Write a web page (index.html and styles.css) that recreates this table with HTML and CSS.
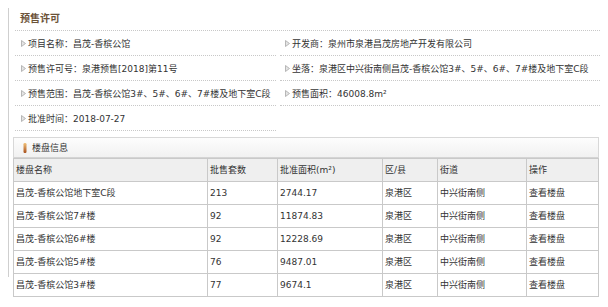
FILE: index.html
```html
<!DOCTYPE html>
<html lang="zh-CN">
<head>
<meta charset="utf-8">
<title>预售许可</title>
<link rel="stylesheet" href="styles.css">
</head>
<body>
<div class="page">
  <div class="rule"></div>
  <div class="content">
    <section class="permit">
      <h2 class="permit-title">预售许可</h2>
      <div class="info">
        <div class="item"><svg class="arrow" viewBox="0 0 5 7"><polygon points="0.5,0.5 4.5,3.5 0.5,6.5"/></svg>项目名称：昌茂-香槟公馆</div>
        <div class="item right"><svg class="arrow" viewBox="0 0 5 7"><polygon points="0.5,0.5 4.5,3.5 0.5,6.5"/></svg>开发商：泉州市泉港昌茂房地产开发有限公司</div>
        <div class="item"><svg class="arrow" viewBox="0 0 5 7"><polygon points="0.5,0.5 4.5,3.5 0.5,6.5"/></svg>预售许可号：泉港预售[2018]第11号</div>
        <div class="item right"><svg class="arrow" viewBox="0 0 5 7"><polygon points="0.5,0.5 4.5,3.5 0.5,6.5"/></svg>坐落：泉港区中兴街南侧昌茂-香槟公馆3#、5#、6#、7#楼及地下室C段</div>
        <div class="item"><svg class="arrow" viewBox="0 0 5 7"><polygon points="0.5,0.5 4.5,3.5 0.5,6.5"/></svg>预售范围：昌茂-香槟公馆3#、5#、6#、7#楼及地下室C段</div>
        <div class="item right"><svg class="arrow" viewBox="0 0 5 7"><polygon points="0.5,0.5 4.5,3.5 0.5,6.5"/></svg>预售面积：46008.8m²</div>
        <div class="item"><svg class="arrow" viewBox="0 0 5 7"><polygon points="0.5,0.5 4.5,3.5 0.5,6.5"/></svg>批准时间：2018-07-27</div>
      </div>
    </section>
    <section class="houses">
      <div class="houses-head"><svg class="flag" viewBox="0 0 4 10"><defs><linearGradient id="fg" x1="0" y1="0" x2="0" y2="1"><stop offset="0" stop-color="#f2c27a"/><stop offset="1" stop-color="#a8501c"/></linearGradient></defs><rect x="0.5" y="0" width="3" height="10" rx="1.2" fill="url(#fg)"/></svg>楼盘信息</div>
      <table class="grid">
        <colgroup>
          <col class="c1"><col class="c2"><col class="c3"><col class="c4"><col class="c5"><col class="c6">
        </colgroup>
        <thead>
          <tr><th>楼盘名称</th><th>批售套数</th><th>批准面积(m²)</th><th>区/县</th><th>街道</th><th>操作</th></tr>
        </thead>
        <tbody>
          <tr><td>昌茂-香槟公馆地下室C段</td><td>213</td><td>2744.17</td><td>泉港区</td><td>中兴街南侧</td><td>查看楼盘</td></tr>
          <tr><td>昌茂-香槟公馆7#楼</td><td>92</td><td>11874.83</td><td>泉港区</td><td>中兴街南侧</td><td>查看楼盘</td></tr>
          <tr><td>昌茂-香槟公馆6#楼</td><td>92</td><td>12228.69</td><td>泉港区</td><td>中兴街南侧</td><td>查看楼盘</td></tr>
          <tr><td>昌茂-香槟公馆5#楼</td><td>76</td><td>9487.01</td><td>泉港区</td><td>中兴街南侧</td><td>查看楼盘</td></tr>
          <tr><td>昌茂-香槟公馆3#楼</td><td>77</td><td>9674.1</td><td>泉港区</td><td>中兴街南侧</td><td>查看楼盘</td></tr>
        </tbody>
      </table>
    </section>
  </div>
</div>
</body>
</html>
```
FILE: styles.css
```css
html, body {
  margin: 0;
  padding: 0;
  background: #ffffff;
}
body {
  font-family: "DejaVu Sans", "Noto Sans CJK SC", sans-serif;
  font-size: 9px;
  color: #333333;
  min-height: 307px;
}
.page {
  display: flex;
  align-items: flex-start;
  padding: 8px 0 0 8px;
}
.rule {
  flex: none;
  width: 1px;
  height: 269px;
  background: #cfcfcf;
}
.content {
  flex: none;
  width: 587px;
  padding-left: 4px;
}
.permit {
  margin-left: 2px;
  width: 585px;
}
.permit-title {
  margin: 0;
  height: 22px;
  line-height: 22px;
  padding-left: 5px;
  font-size: 10px;
  font-weight: bold;
  color: #6b5238;
}
.info {
  display: grid;
  grid-template-columns: 261px 320px;
  column-gap: 4px;
  border-top: 1px dotted #c8c8c8;
}
.item {
  height: 24px;
  border-bottom: 1px dotted #c8c8c8;
  display: flex;
  align-items: center;
  padding-left: 6px;
  white-space: nowrap;
  color: #333333;
}
.item.right {
  padding-left: 5px;
}
.arrow {
  width: 5px;
  height: 7px;
  margin-right: 2px;
  flex: none;
}
.arrow polygon {
  fill: #e4e4e4;
  stroke: #a8a8a8;
  stroke-width: 0.8;
}
.houses {
  margin-top: 6px;
  width: 584px;
  border: 1px solid #d8d8d8;
  border-bottom: none;
}
.houses-head {
  height: 19px;
  display: flex;
  align-items: center;
  padding-left: 9px;
  background: linear-gradient(#fdfdfd, #f1f1f1);
  border-bottom: 1px solid #d4d4d4;
  color: #333333;
}
.flag {
  width: 4px;
  height: 10px;
  margin-right: 5px;
}
.grid {
  width: 585px;
  margin-left: -1px;
  border-collapse: collapse;
  table-layout: fixed;
}
.c1 { width: 194px; }
.c2 { width: 70px; }
.c3 { width: 105px; }
.c4 { width: 55px; }
.c5 { width: 89px; }
.c6 { width: 72px; }
.grid tr {
  height: 23px;
}
.grid th,
.grid td {
  border: 1px solid #c9c9c9;
  line-height: 12px;
  padding: 0 0 0 2px;
  text-align: left;
  font-weight: normal;
  white-space: nowrap;
  overflow: hidden;
  color: #333333;
}
.grid th {
  background: #efefef;
}
.grid td {
  background: #ffffff;
}
```
